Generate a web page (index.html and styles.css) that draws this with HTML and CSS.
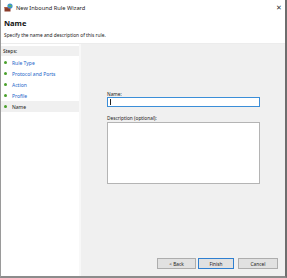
FILE: index.html
```html
<!doctype HTML>
<html>
  <head>
    <title>New Inbound Rule Wizard</title>
    <link rel="stylesheet" href="styles.css">
  </head>
  <body>
    <div class="window">
      <div class="titlebar">
        <svg class="app-icon" width="9" height="9" viewBox="0 0 9 9">
          <rect x="0.5" y="4" width="6" height="4.5" fill="#8a3b2a"/>
          <rect x="0.5" y="4" width="6" height="1.2" fill="#b25a40"/>
          <circle cx="6" cy="3" r="2.6" fill="#3d8fd6"/>
          <path d="M4.2 2.4 Q6 1.2 7.8 2.6 L7.4 4 Q6 3 4.6 3.6 Z" fill="#5cb85c"/>
        </svg>
        <span class="title">New Inbound Rule Wizard</span>
        <span class="close">&#x2715;</span>
      </div>
      <div class="header">
        <div class="header-title">Name</div>
        <div class="header-desc">Specify the name and description of this rule.</div>
      </div>
      <div class="main">
        <div class="steps">
          <div class="steps-head">Steps:</div>
          <div class="step"><span class="dot"></span>Rule Type</div>
          <div class="step"><span class="dot"></span>Protocol and Ports</div>
          <div class="step"><span class="dot"></span>Action</div>
          <div class="step"><span class="dot"></span>Profile</div>
          <div class="step step-current"><span class="dot"></span>Name</div>
        </div>
        <div class="divider"></div>
        <div class="content">
          <div class="form">
            <label class="label">Name:</label>
            <div class="input"><span class="caret"></span></div>
            <label class="label label-desc">Description (optional):</label>
            <div class="textarea"></div>
          </div>
          <div class="buttons">
            <button class="btn">&lt; Back</button>
            <button class="btn btn-default">Finish</button>
            <button class="btn btn-cancel">Cancel</button>
          </div>
        </div>
      </div>
    </div>
  </body>
</html>
```

FILE: styles.css
```css
body {
  margin: 0;
  padding: 0;
  background-color: white;
  font-family: 'Noto Sans', sans-serif;
  overflow: hidden;
}
.window {
  width: 287px;
  height: 278px;
  box-sizing: border-box;
  border-left: 1px solid #9a9a9a;
  border-right: 2px solid #6e6e6e;
  border-bottom: 2px solid #8c8c8c;
  display: flex;
  flex-direction: column;
  background-color: white;
}
.titlebar {
  height: 15px;
  display: flex;
  align-items: center;
  padding-left: 3px;
  padding-right: 3px;
}
.app-icon {
  margin-right: 3px;
}
.title {
  font-size: 5.7px;
  color: #222;
  flex: 1;
}
.close {
  font-size: 7px;
  color: #333;
}
.header {
  padding: 3px 3px 0 3px;
  height: 25px;
}
.header-title {
  font-size: 7.5px;
  font-weight: bold;
  color: #111;
  line-height: 10px;
}
.header-desc {
  font-size: 4.8px;
  color: #222;
  margin-top: 3px;
  line-height: 8px;
}
.main {
  flex: 1;
  display: flex;
  border-top: 1px solid #ececec;
}
.steps {
  width: 78px;
  background-color: white;
  padding-top: 2px;
}
.steps-head {
  background-color: #f0f0f0;
  height: 10px;
  line-height: 10px;
  font-size: 5px;
  padding-left: 2px;
  color: #111;
  margin-bottom: 1px;
}
.step {
  height: 11px;
  display: flex;
  align-items: center;
  font-size: 5px;
  color: #1a64c8;
}
.step-current {
  background-color: #f0f0f0;
  color: #222;
}
.dot {
  width: 3px;
  height: 3px;
  border-radius: 50%;
  background-color: #4aa02c;
  margin-left: 3px;
  margin-right: 5px;
}
.divider {
  width: 2px;
  background-color: #f8f8f8;
}
.content {
  flex: 1;
  background-color: #f0f0f0;
  display: flex;
  flex-direction: column;
  padding-left: 26px;
}
.form {
  flex: 1;
  padding-top: 47px;
}
.label {
  display: block;
  font-size: 4.8px;
  color: #222;
  line-height: 6px;
}
.input {
  width: 153px;
  height: 10px;
  box-sizing: border-box;
  border: 1px solid #3b8ed8;
  background-color: white;
  margin-top: 0;
  padding-left: 2px;
  display: flex;
  align-items: center;
}
.caret {
  width: 1px;
  height: 6px;
  background-color: #222;
}
.label-desc {
  margin-top: 8px;
}
.textarea {
  width: 153px;
  height: 62px;
  box-sizing: border-box;
  border: 1px solid #b4b4b4;
  background-color: white;
  margin-top: 1px;
}
.buttons {
  display: flex;
  justify-content: flex-end;
  padding-right: 7px;
  padding-bottom: 7px;
  gap: 2px;
}
.btn {
  width: 39px;
  height: 11px;
  padding: 0;
  font-family: 'Noto Sans', sans-serif;
  font-size: 4.8px;
  color: #222;
  background-color: #e1e1e1;
  border: 1px solid #adadad;
  border-radius: 0;
}
.btn-default {
  width: 36px;
  border-color: #2f7fd0;
}
.btn-cancel {
  margin-left: 2px;
  width: 40px;
}
```
